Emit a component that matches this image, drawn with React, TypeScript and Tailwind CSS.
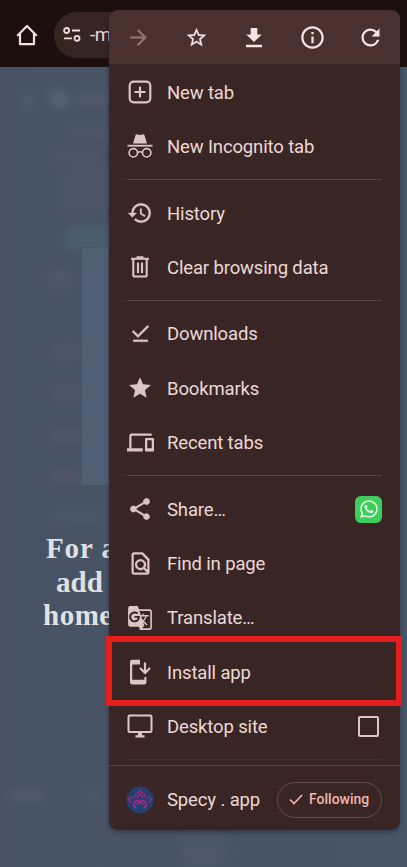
import type { ReactNode } from "react";
import {
  MdArrowForward,
  MdDevices,
  MdDownloadDone,
  MdGTranslate,
  MdHistory,
  MdInfoOutline,
  MdOutlineFindInPage,
  MdRefresh,
  MdShare,
  MdStar,
  MdStarBorder,
} from "react-icons/md";
import { FaWhatsapp } from "react-icons/fa";

const heavy = { strokeWidth: 0.25, className: "[&>path[fill=none]]:stroke-none" };

function HomeIcon() {
  return (
    <svg width="22" height="22" viewBox="0 0 22 22" fill="none" stroke="#f6e0de" strokeWidth="2.200" strokeLinejoin="round" strokeLinecap="round">
      <path d="M1.800 11.200 11 2l9.200 9.200M4 9.500V20.200h14V9.500" />
    </svg>
  );
}

function TuneIcon() {
  return (
    <svg width="18" height="15" viewBox="0 0 18 15" fill="none" stroke="#f0dcda" strokeWidth="1.800">
      <circle cx="3.600" cy="3.500" r="2.500" />
      <path d="M9 3.500h8M1 11.300h8" />
      <circle cx="14" cy="11.300" r="2.500" />
    </svg>
  );
}

function DownloadIcon() {
  return (
    <svg width="18" height="21" viewBox="0 0 18 21" fill="#fbe3e1">
      <path d="M5.700 1h6.600v6.500h4.500L9 15 1.200 7.500h4.500zM1 17.800h16v2.400H1z" />
    </svg>
  );
}

function NewTabIcon() {
  return (
    <svg width="24" height="24" viewBox="0 0 24 24" fill="none" stroke="currentColor" strokeWidth="2.200">
      <rect x="1.700" y="1.700" width="20.600" height="20.600" rx="4" />
      <path d="M12 6.500v11M6.500 12h11" />
    </svg>
  );
}

function IncognitoIcon() {
  return (
    <svg width="26" height="26" viewBox="0 0 26 26">
      <path d="M6 10.500 8.500 2.300Q9 1 10.400 1.400L13 2l2.600-.6q1.400-.4 1.900.9L20 10.500z" fill="currentColor" />
      <path d="M.5 11.800h25v1.800H.5z" fill="currentColor" />
      <g fill="none" stroke="currentColor" strokeWidth="1.600">
        <circle cx="6.300" cy="19.800" r="4.200" />
        <circle cx="19.700" cy="19.800" r="4.200" />
        <path d="M10.500 19.500q2.500-1.500 5 0" />
      </g>
    </svg>
  );
}

function TrashIcon() {
  return (
    <svg width="20" height="22" viewBox="0 0 20 22" fill="none" stroke="currentColor" strokeWidth="2.100">
      <path d="M1 2.700h18M6.500 1.400h7M3.300 3v16q0 1.500 1.500 1.500h10.400q1.500 0 1.500-1.500V3M8 6.500v10.500M12 6.500v10.500" />
    </svg>
  );
}

function InstallIcon() {
  return (
    <svg width="22" height="26" viewBox="0 0 22 26">
      <path
        d="M11 .8H3.200Q1 .8 1 3v20.200q0 2.200 2.200 2.200h12q2.200 0 2.200-2.200V18h-2v2.800H3.200V5.600H11z"
        fill="currentColor"
      />
      <path d="M16 3.500v10M11 9l5 5 5-5" fill="none" stroke="currentColor" strokeWidth="2.200" />
    </svg>
  );
}

function DesktopIcon() {
  return (
    <svg width="26" height="24" viewBox="0 0 26 24">
      <rect x="1.500" y="1.500" width="23" height="16.500" rx="1.300" fill="none" stroke="currentColor" strokeWidth="2" />
      <path d="M11 18h4v3.300h2.500v2.200h-9v-2.200H11z" fill="currentColor" />
    </svg>
  );
}

function SpecyLogo() {
  return (
    <svg width="28" height="28" viewBox="0 0 28 28" fill="none">
      <circle cx="14" cy="14" r="13.500" fill="#233f6b" />
      <g stroke="#a92589" strokeWidth="1.700">
        <path d="m11 7.500 3-2.500 3 2.500" strokeDasharray="2.500 .6" />
        <path d="M5.500 10.500 2.500 13.500l3 3M22.500 10.500l3 3-3 3" strokeDasharray="2.500 .8" />
        <path d="M7.500 12.500 9.500 9l2 2L14 8.500l2.500 2.500 2-2 2 3.500" strokeDasharray="2.500 .6" />
        <path d="M10.500 22 7.500 19.500l1.500-4 3-1.200 2 2 2-2 3 1.200 1.500 4-3 2.500M10.500 18l3.500-1.500 3.500 1.500" />
      </g>
    </svg>
  );
}

function Row({ icon, label, children }: { icon: ReactNode; label: string; children?: ReactNode }) {
  return (
    <div className="relative flex h-[54.3px] items-center pl-[15px] pr-[18px] text-[#dcc5c3]">
      <div className="flex w-8 shrink-0 justify-center">{icon}</div>
      <span className="ml-[11px] flex-1 whitespace-nowrap pt-px text-[18.5px] leading-6 tracking-[-0.14px] text-[#ecd8d6]">
        {label}
      </span>
      {children}
    </div>
  );
}

function Divider() {
  return (
    <div className="flex h-[12.3px] items-center px-[18px]">
      <div className="h-px w-full bg-[#594542]" />
    </div>
  );
}

const smudges = [
  "left-[49px] top-[90px] h-[18px] w-[20px] rounded-full bg-[#606b80]/70",
  "left-[22px] top-[92px] h-[18px] w-[14px] bg-[#56627a]/40",
  "left-[75px] top-[90px] h-[16px] w-[40px] bg-[#596176]/40",
  "left-[65px] top-[127px] h-[16px] w-[50px] bg-[#5a5c71]/35",
  "left-[50px] top-[150px] h-[12px] w-[50px] bg-[#5a5c71]/40",
  "left-[62px] top-[165px] h-[50px] w-[50px] bg-[#55586c]/45",
  "left-[66px] top-[225px] h-[26px] w-[46px] bg-[#4b6671]/60",
  "left-[48px] top-[268px] h-[20px] w-[24px] bg-[#5b5c6f]/40",
  "left-[50px] top-[346px] h-[12px] w-[32px] bg-[#5b5c6f]/50",
  "left-[50px] top-[387px] h-[12px] w-[32px] bg-[#5b5c6f]/50",
  "left-[50px] top-[430px] h-[12px] w-[32px] bg-[#5b5c6f]/50",
  "left-[50px] top-[471px] h-[12px] w-[32px] bg-[#5b5c6f]/50",
  "left-[50px] top-[512px] h-[12px] w-[55px] bg-[#525b70]/50",
  "left-[8px] top-[788px] h-[12px] w-[38px] bg-[#5a6075]/50",
  "left-[88px] top-[788px] h-[12px] w-[14px] bg-[#566176]/40",
  "left-[180px] top-[840px] h-[26px] w-[45px] bg-[#555a70]/50",
];

export default function App() {
  return (
    <div className="relative flex h-[867px] w-[407px] flex-col overflow-hidden bg-[#495467] font-['Roboto',sans-serif]">
      <header className="flex h-[67px] shrink-0 items-center bg-[#1c100f] pl-4">
        <div className="mt-0.5 flex w-[38px]">
          <HomeIcon />
        </div>
        <div className="mt-0.5 flex h-[46px] w-[300px] items-center rounded-full bg-[#372524] pl-[9px]">
          <TuneIcon />
          <span className="ml-[9px] pt-px text-[19px] tracking-[-0.5px] text-[#ecd8d6]">-m</span>
        </div>
      </header>

      <main className="flex-1 bg-linear-to-r from-[#495265] via-[#475466] to-[#485568] pt-[465px]">
        <div className="font-['Liberation_Serif',serif] text-[29px] font-bold leading-[33.7px] text-[#dfe2e5]">
          <p className="whitespace-nowrap pl-[46px] tracking-[0.9px]">For a</p>
          <p className="whitespace-nowrap pl-[56px]">add</p>
          <p className="whitespace-nowrap pl-[43px] tracking-[0.5px]">home</p>
        </div>
      </main>

      <div className="absolute left-[82px] top-[248px] h-[237px] w-[40px] bg-[#516074]" />
      {smudges.map((place) => (
        <div key={place} className={`absolute blur-[5px] ${place}`} />
      ))}

      <div className="absolute left-[109px] top-[10px] flex h-[820px] w-[291px] flex-col rounded-[9px] bg-[#392624] shadow-[0_2px_5px_rgba(25,25,40,0.5)]">
        <div className="grid h-[54px] shrink-0 grid-cols-5 place-items-center rounded-t-[9px] bg-[#4b3030] text-[#fbe3e1]">
          <MdArrowForward size={25} {...heavy} color="#8e7473" />
          <MdStarBorder size={23} {...heavy} />
          <DownloadIcon />
          <MdInfoOutline size={27} />
          <MdRefresh size={27} />
        </div>

        <nav className="flex flex-col pt-px">
          <Row icon={<NewTabIcon />} label="New tab" />
          <Row icon={<IncognitoIcon />} label="New Incognito tab" />
          <Divider />
          <Row icon={<MdHistory size={26} {...heavy} />} label="History" />
          <Row icon={<TrashIcon />} label="Clear browsing data" />
          <Divider />
          <Row icon={<MdDownloadDone size={25} {...heavy} />} label="Downloads" />
          <Row icon={<MdStar size={26} />} label="Bookmarks" />
          <Row icon={<MdDevices size={27} />} label="Recent tabs" />
          <Divider />
          <Row icon={<MdShare size={26} {...heavy} />} label="Share…">
            <span className="flex size-[27px] items-center justify-center rounded-[6px] bg-[#3fce5b] text-[#effff1]">
              <FaWhatsapp size={20} />
            </span>
          </Row>
          <Row icon={<MdOutlineFindInPage size={27} />} label="Find in page" />
          <Row icon={<MdGTranslate size={26} />} label="Translate…" />
          <Row icon={<InstallIcon />} label="Install app">
            <div className="absolute -left-[3px] -top-[8.500px] h-[70px] w-[296px] border-[6px] border-[#e31c1c]" />
          </Row>
          <Row icon={<DesktopIcon />} label="Desktop site">
            <span className="mr-[3px] size-[21px] rounded-[2px] border-2 border-[#dcc5c3]" />
          </Row>
        </nav>
        <div className="flex h-[12px] items-center px-[18px]">
          <div className="h-px w-full bg-[#453230]" />
        </div>

        <footer className="flex flex-1 items-center border-t border-[#594542] pl-[17px] pr-[18px] pt-[3px]">
          <SpecyLogo />
          <span className="ml-[13px] flex-1 whitespace-nowrap pt-[3px] text-[18.5px] tracking-[-0.13px] text-[#ecd8d6]">
            Specy . app
          </span>
          <button className="flex h-9 w-[105px] items-center rounded-full border border-[#654f4d] pl-[11px] text-[#f3b4ad]">
            <svg width="14" height="11" viewBox="0 0 14 11" fill="none" stroke="currentColor" strokeWidth="1.600">
              <path d="m1 5.500 4 4L13 1" />
            </svg>
            <span className="ml-[6px] text-[14px] font-medium">Following</span>
          </button>
        </footer>
      </div>
    </div>
  );
}
